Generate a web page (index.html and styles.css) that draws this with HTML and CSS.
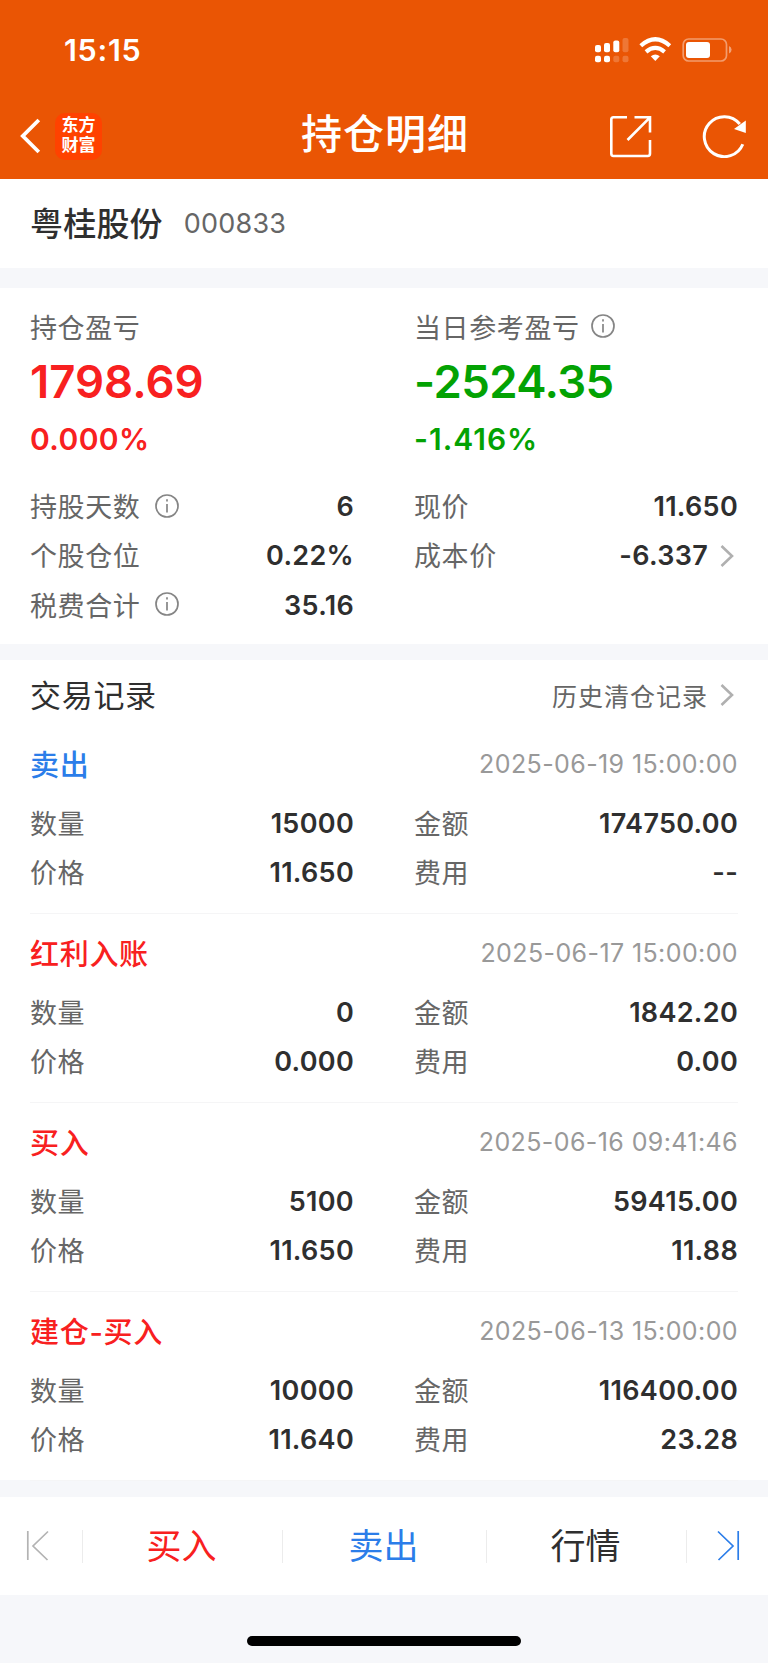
FILE: index.html
```html
<!DOCTYPE html>
<html lang="zh-CN">
<head>
    <meta charset="UTF-8">
    <title>持仓明细</title>
    <link rel="stylesheet" href="styles.css">
</head>
<body>
    <header class="header">
        <div class="status-bar">
            <span class="clock">15:15</span>
            <svg class="status-icons" width="140" height="30" viewBox="0 0 140 30">
                <g fill="#fff">
                    <rect x="1" y="11" width="6" height="7.3" rx="2"/>
                    <rect x="10" y="9" width="6" height="9.3" rx="2"/>
                    <rect x="19.3" y="6.5" width="6" height="11.8" rx="2"/>
                    <rect x="28.5" y="4" width="6" height="14.3" rx="2" opacity=".2"/>
                    <rect x="1" y="21.7" width="6" height="6.6" rx="2"/>
                    <rect x="10" y="21.7" width="6" height="6.6" rx="2"/>
                    <rect x="19.3" y="21.7" width="6" height="6.6" rx="2" opacity=".2"/>
                    <rect x="28.5" y="21.7" width="6" height="6.6" rx="2" opacity=".2"/>
                    <path d="M56.8 22.2Q61.3 19 65.8 22.2L61.3 27Z"/>
                    <rect x="92" y="8" width="24" height="16" rx="3"/>
                    <path d="M135 12Q137.6 13 137.6 15.8T135 19.5Z" opacity=".45"/>
                </g>
                <path d="M46.8 11.8Q61.3 -1.2 75.8 11.8M52 17.8Q61.3 10 70.6 17.8" fill="none" stroke="#fff" stroke-width="4.2"/>
                <rect x="89.2" y="5" width="43.3" height="22" rx="5.5" fill="none" stroke="#fff" stroke-width="1.7" opacity=".42"/>
            </svg>
        </div>
        <div class="nav">
            <div class="nav-left">
                <svg class="back" width="24" height="38" viewBox="0 0 24 38"><path d="M20.8 3L4.8 19L20.8 35" fill="none" stroke="#fff" stroke-width="3.8"/></svg>
                <div class="logo"><span>东方</span><span>财富</span></div>
            </div>
            <h1 class="title">持仓明细</h1>
            <div class="nav-right">
                <svg width="44" height="44" viewBox="0 0 44 44" fill="none" stroke="#fff" stroke-width="2.6">
                    <path d="M18 3.3H4.5Q2.3 3.3 2.3 5.5V39.5Q2.3 42 4.5 42H38.7Q41 42 41 39.5V26M25.5 3.3H41V18.5M40.5 3.8L18.5 26"/>
                </svg>
                <svg width="46" height="44" viewBox="0 0 46 44">
                    <path d="M40.8 30.2A20 20 0 1 1 37.8 10" fill="none" stroke="#fff" stroke-width="3"/>
                    <path d="M43.8 6.5L43.8 19L32 15Z" fill="#fff"/>
                </svg>
            </div>
        </div>
    </header>

    <section class="stock">
        <span class="stock-name">粤桂股份</span>
        <span class="stock-code">000833</span>
    </section>

    <section class="summary">
        <div class="profit-grid">
            <div class="profit up">
                <div class="label">持仓盈亏</div>
                <div class="amount">1798.69</div>
                <div class="percent">0.000%</div>
            </div>
            <div class="profit down">
                <div class="label">当日参考盈亏<svg class="info near" viewBox="0 0 24 24"><circle cx="12" cy="12" r="11"/><path d="M12 10V18.5M12 5.2V7.4"/></svg></div>
                <div class="amount">-2524.35</div>
                <div class="percent">-1.416%</div>
            </div>
        </div>
        <div class="rows">
            <div class="row"><span class="label">持股天数<svg class="info" viewBox="0 0 24 24"><circle cx="12" cy="12" r="11"/><path d="M12 10V18.5M12 5.2V7.4"/></svg></span><span class="value">6</span></div>
            <div class="row"><span class="label">现价</span><span class="value">11.650</span></div>
            <div class="row"><span class="label">个股仓位</span><span class="value">0.22%</span></div>
            <div class="row"><span class="label">成本价</span><span class="value">-6.337<svg class="arrow" viewBox="0 0 14 22"><path d="M1.5 1L12 11L1.5 21"/></svg></span></div>
            <div class="row"><span class="label">税费合计<svg class="info" viewBox="0 0 24 24"><circle cx="12" cy="12" r="11"/><path d="M12 10V18.5M12 5.2V7.4"/></svg></span><span class="value">35.16</span></div>
        </div>
    </section>

    <section class="records">
        <div class="records-head">
            <h2>交易记录</h2>
            <div class="history">历史清仓记录<svg class="arrow" viewBox="0 0 14 22"><path d="M1.5 1L12 11L1.5 21"/></svg></div>
        </div>

        <div class="record">
            <div class="record-head"><span class="type sell">卖出</span><span class="date">2025-06-19 15:00:00</span></div>
            <div class="rows">
                <div class="row"><span class="label">数量</span><span class="value">15000</span></div>
                <div class="row"><span class="label">金额</span><span class="value">174750.00</span></div>
                <div class="row"><span class="label">价格</span><span class="value">11.650</span></div>
                <div class="row"><span class="label">费用</span><span class="value">--</span></div>
            </div>
        </div>

        <div class="record">
            <div class="record-head"><span class="type buy">红利入账</span><span class="date">2025-06-17 15:00:00</span></div>
            <div class="rows">
                <div class="row"><span class="label">数量</span><span class="value">0</span></div>
                <div class="row"><span class="label">金额</span><span class="value">1842.20</span></div>
                <div class="row"><span class="label">价格</span><span class="value">0.000</span></div>
                <div class="row"><span class="label">费用</span><span class="value">0.00</span></div>
            </div>
        </div>

        <div class="record">
            <div class="record-head"><span class="type buy">买入</span><span class="date">2025-06-16 09:41:46</span></div>
            <div class="rows">
                <div class="row"><span class="label">数量</span><span class="value">5100</span></div>
                <div class="row"><span class="label">金额</span><span class="value">59415.00</span></div>
                <div class="row"><span class="label">价格</span><span class="value">11.650</span></div>
                <div class="row"><span class="label">费用</span><span class="value">11.88</span></div>
            </div>
        </div>

        <div class="record">
            <div class="record-head"><span class="type buy">建仓-买入</span><span class="date">2025-06-13 15:00:00</span></div>
            <div class="rows">
                <div class="row"><span class="label">数量</span><span class="value">10000</span></div>
                <div class="row"><span class="label">金额</span><span class="value">116400.00</span></div>
                <div class="row"><span class="label">价格</span><span class="value">11.640</span></div>
                <div class="row"><span class="label">费用</span><span class="value">23.28</span></div>
            </div>
        </div>
    </section>

    <nav class="actions">
        <div class="action"><svg width="24" height="32" viewBox="0 0 24 32" fill="none" stroke="#b3b3b3" stroke-width="1.7"><path d="M1.8 1V30M22 1.5L7 16L21.5 30"/></svg></div>
        <div class="action buy"><span>买入</span></div>
        <div class="action sell"><span>卖出</span></div>
        <div class="action"><span>行情</span></div>
        <div class="action"><svg width="24" height="32" viewBox="0 0 24 32" fill="none" stroke="#2b7de9" stroke-width="1.7"><path d="M22.2 1V30M2 1.5L17 16L2.5 30"/></svg></div>
    </nav>
    <div class="home-bar"></div>
</body>
</html>
```

FILE: styles.css
```css
* {
    box-sizing: border-box;
}
body {
    margin: 0;
    width: 768px;
    height: 1663px;
    overflow: hidden;
    background: #f6f7fa;
    color: #2f2f2f;
    font-family: Inter, "Noto Sans CJK SC", sans-serif;
}
h1, h2 {
    margin: 0;
}
.header {
    height: 179px;
    background: #ea5504;
    color: #fff;
}
.status-bar {
    height: 98px;
    padding: 0 26px 0 64px;
    display: flex;
    justify-content: space-between;
    align-items: center;
}
.clock {
    font-size: 30.5px;
    font-weight: 600;
    letter-spacing: 0.7px;
}
.status-icons {
    margin-right: 8px;
}
.nav {
    height: 76px;
    padding: 0 20px 0 18px;
    display: grid;
    grid-template-columns: 1fr auto 1fr;
    align-items: center;
}
.nav-left {
    display: flex;
    align-items: center;
    gap: 13px;
}
.logo {
    width: 47px;
    height: 47px;
    border-radius: 10px;
    background: #ff4200;
    font-size: 17px;
    font-weight: 700;
    line-height: 20px;
    padding: 2px 0 5px;
    display: flex;
    flex-direction: column;
    align-items: center;
}
.title {
    font-size: 41px;
    font-weight: 500;
    letter-spacing: 1px;
    line-height: 72px;
    padding: 0 0 4px 4px;
}
.nav-right {
    display: flex;
    justify-content: flex-end;
    gap: 49px;
}
.stock {
    height: 89px;
    padding: 0 30px;
    background: #fff;
    display: flex;
    align-items: center;
    gap: 21px;
}
.stock-name {
    font-size: 33px;
    font-weight: 500;
    letter-spacing: 0.2px;
    padding-bottom: 4px;
}
.stock-code {
    font-size: 27px;
    letter-spacing: 0.2px;
    color: #666;
}
.summary {
    margin-top: 20px;
    height: 356px;
    padding: 20px 30px 0;
    background: #fff;
}
.profit-grid, .rows {
    display: grid;
    grid-template-columns: 324px 324px;
    column-gap: 60px;
}
.profit-grid {
    margin-bottom: 20px;
}
.label {
    display: flex;
    align-items: center;
    padding-bottom: 2px;
    color: #666;
    font-size: 27px;
    letter-spacing: 0.6px;
}
.profit .label {
    height: 39px;
    padding-bottom: 3px;
}
.amount {
    font-size: 45.5px;
    font-weight: 600;
    line-height: 70px;
}
.percent {
    font-size: 30px;
    font-weight: 600;
    line-height: 45px;
    letter-spacing: 0.4px;
}
.up {
    color: #f82020;
}
.down {
    color: #03a203;
}
.down .amount {
    letter-spacing: -0.6px;
}
.down .percent {
    letter-spacing: 1px;
}
.info {
    width: 24px;
    height: 24px;
    margin-left: 15px;
    fill: none;
    stroke: #858585;
    stroke-width: 1.7;
}
.info.near {
    margin-left: 11px;
}
.row {
    height: 49.3px;
    display: flex;
    justify-content: space-between;
    align-items: center;
}
.value {
    display: flex;
    align-items: center;
    font-size: 27px;
    font-weight: 600;
    letter-spacing: 0.3px;
}
.arrow {
    width: 14px;
    height: 22px;
    margin: 0 4px 0 12px;
    fill: none;
    stroke: #b0b0b0;
    stroke-width: 2.6;
}
.records {
    margin-top: 16px;
    height: 820px;
    padding: 0 30px;
    background: #fff;
}
.records-head {
    height: 65px;
    padding-top: 5px;
    display: flex;
    justify-content: space-between;
    align-items: center;
}
.records-head h2 {
    font-size: 31px;
    font-weight: 400;
    letter-spacing: 0.7px;
    padding-bottom: 4px;
}
.history {
    display: flex;
    align-items: center;
    padding-bottom: 1px;
    color: #666;
    font-size: 25px;
    letter-spacing: 1px;
}
.record {
    height: 189px;
    padding-top: 14px;
    border-bottom: 1px solid #f5f5f6;
}
.record-head {
    height: 60px;
    padding-bottom: 10px;
    display: flex;
    justify-content: space-between;
    align-items: center;
}
.type {
    font-size: 29px;
    font-weight: 500;
    letter-spacing: 0.7px;
    padding-bottom: 3px;
}
.buy {
    color: #f82020;
}
.sell {
    color: #2b7de9;
}
.date {
    color: #999;
    font-size: 25px;
    letter-spacing: 0.4px;
}
.actions {
    margin-top: 17px;
    height: 98px;
    background: #fff;
    display: grid;
    grid-template-columns: 83px 200px 204px 200px 81px;
    align-items: center;
}
.action {
    height: 33px;
    display: flex;
    justify-content: center;
    align-items: center;
    font-size: 35px;
    border-right: 1px solid #ececec;
}
.action span {
    padding: 0 2px 5px 0;
}
.action:first-child {
    padding-right: 6px;
}
.action:last-child {
    padding-left: 1px;
    border-right: none;
}
.home-bar {
    width: 274px;
    height: 10px;
    margin: 41px auto 0;
    border-radius: 5px;
    background: #000;
}
```
